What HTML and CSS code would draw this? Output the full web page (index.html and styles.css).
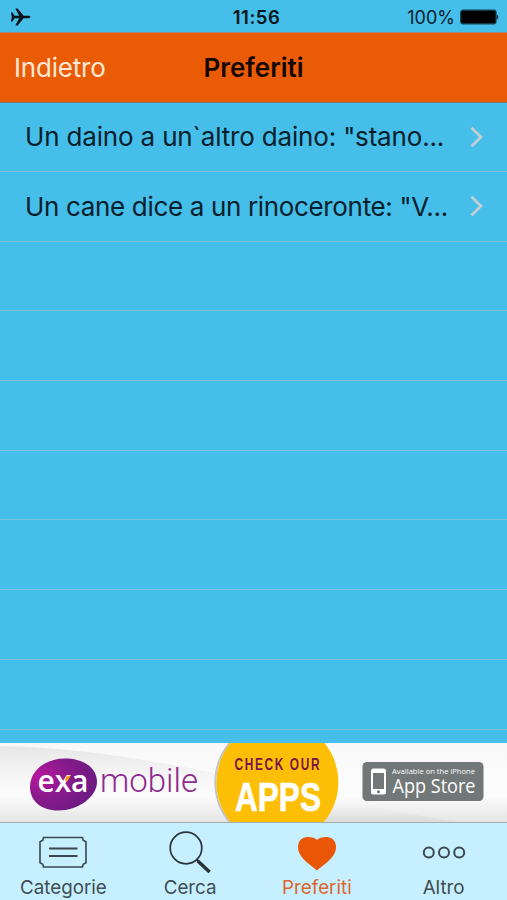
FILE: index.html
```html
<!DOCTYPE html>
<html lang="it">
<head>
    <meta charset="UTF-8">
    <meta name="viewport" content="width=device-width, initial-scale=1.0">
    <title>Preferiti</title>
    <link rel="stylesheet" href="styles.css">
</head>
<body>
    <div class="app">
        <div class="status-bar">
            <svg class="plane" width="20" height="18" viewBox="0 0 20 18">
                <path d="M0 4.500h1.500L3.600 7.700h4.600L4.300.6h2.300L12.600 7.700h5q1.900.2 1.900 1.300t-1.900 1.300h-5L6.600 17.400H4.300L8.200 10.300H3.600L1.500 13.500H0L.8 9z" fill="#05121a"/>
            </svg>
            <span class="time">11:56</span>
            <div class="battery">
                <span class="percent">100%</span>
                <svg width="39" height="16" viewBox="0 0 39 16">
                    <rect x=".7" y="1.200" width="35.300" height="13.600" rx="2.200" fill="#000" stroke="#12414f" stroke-width="1.200"/>
                    <path d="M36.700 5.500q1.600.6 1.600 2.500t-1.600 2.500z" fill="#082530"/>
                </svg>
            </div>
        </div>

        <div class="nav-bar">
            <a class="back">Indietro</a>
            <h1 class="title">Preferiti</h1>
        </div>

        <ul class="list">
            <li class="row">
                <span class="joke first">Un daino a un`altro daino: "stano...</span>
                <svg class="chevron" width="14" height="22" viewBox="0 0 14 22"><path d="M1.500 1.800L11 11l-9.500 9.200" fill="none" stroke="#c3ced2" stroke-width="2.700"/></svg>
            </li>
            <li class="row">
                <span class="joke second">Un cane dice a un rinoceronte: "V...</span>
                <svg class="chevron" width="14" height="22" viewBox="0 0 14 22"><path d="M1.500 1.800L11 11l-9.500 9.200" fill="none" stroke="#c3ced2" stroke-width="2.700"/></svg>
            </li>
            <li class="row"></li>
            <li class="row"></li>
            <li class="row"></li>
            <li class="row"></li>
            <li class="row"></li>
            <li class="row"></li>
            <li class="row"></li>
        </ul>

        <div class="banner">
            <svg width="507" height="80" viewBox="0 0 507 80">
                <defs>
                    <linearGradient id="paper" x1="0" y1="0" x2="0" y2="1">
                        <stop offset="0" stop-color="#f8f8f8"/>
                        <stop offset=".65" stop-color="#fdfdfd"/>
                        <stop offset="1" stop-color="#e4e4e4"/>
                    </linearGradient>
                    <linearGradient id="sweep" x1="0" y1="0" x2="0" y2="1">
                        <stop offset="0" stop-color="#f4f4f4" stop-opacity="0"/>
                        <stop offset="1" stop-color="#d9d9d9"/>
                    </linearGradient>
                    <radialGradient id="blob" cx=".15" cy=".35" r=".8">
                        <stop offset="0" stop-color="#b5179e"/>
                        <stop offset=".5" stop-color="#8a1a8c"/>
                        <stop offset="1" stop-color="#6f1b83"/>
                    </radialGradient>
                    <linearGradient id="fade" x1="0" y1="0" x2="0" y2="1">
                        <stop offset="0" stop-color="#e6e6e6"/>
                        <stop offset="1" stop-color="#fdfdfd" stop-opacity="0"/>
                    </linearGradient>
                </defs>
                <rect width="507" height="80" fill="url(#paper)"/>
                <path d="M0 3C70 4 140 15 225 32V68H0z" fill="url(#fade)"/>
                <path d="M320 58C380 60 420 76 470 80H320z" fill="url(#sweep)"/>

                <path d="M30 44C30 27 46 15.500 65 15.500C84 15.500 97 25 97 39C97 54 78 67.500 58 67.500C41 67.500 30 58 30 44z" fill="url(#blob)"/>
                <text class="exa" x="37.500" y="49" textLength="51">exa</text>
                <path d="M64.500 37l2.200-4.200h3.800l-3.300 5.500z" fill="#f7a11b"/>
                <text class="mobile" x="100" y="49" textLength="98" lengthAdjust="spacingAndGlyphs">mobile</text>

                <path d="M229.500 0A62 62 0 0 0 230.500 80" fill="none" stroke="#c4c4c4" stroke-width="2"/>
                <path d="M230.500 0H324.500A62 62 0 0 1 323 80H231.500A62 62 0 0 1 230.500 0z" fill="#fdbf06"/>
                <text class="check" transform="translate(234.500 27) scale(.72 1)" textLength="118">CHECK OUR</text>
                <text class="apps" x="235" y="67.500" textLength="86" lengthAdjust="spacingAndGlyphs">APPS</text>

                <rect x="362.500" y="19" width="121" height="39" rx="4.500" fill="#727777"/>
                <rect x="371" y="25.500" width="15" height="26" rx="2.500" fill="#fff"/>
                <rect x="373" y="30" width="11" height="16" fill="#727777"/>
                <circle cx="378.500" cy="48.800" r="1.500" fill="#727777"/>
                <text class="available" x="392" y="31" textLength="83" lengthAdjust="spacingAndGlyphs">Available on the iPhone</text>
                <text class="store" x="392.500" y="50" textLength="83" lengthAdjust="spacingAndGlyphs">App Store</text>
                <rect y="79" width="507" height="1" fill="#a9adae"/>
            </svg>
        </div>

        <div class="tab-bar">
            <a class="tab">
                <svg width="50" height="44" viewBox="0 0 50 44" fill="none" stroke="#3b474c" stroke-width="1.600">
                    <path d="M5.500 14.500H44.500L45.200 17.200L48 18.800V39.700L45.200 41.300L44.500 44H5.500L4.800 41.300L2 39.700V18.800L4.800 17.200z"/>
                    <path d="M11 25.500H39.500M11 33H39.500" stroke-width="2"/>
                </svg>
                <span class="label categorie">Categorie</span>
            </a>
            <a class="tab">
                <svg width="50" height="44" viewBox="0 0 50 44" fill="none" stroke="#2c3337">
                    <circle cx="21" cy="25" r="15.800" stroke-width="1.700"/>
                    <path d="M31.500 36.500l3 3" stroke-width="2.200"/>
                    <path d="M32.800 38L44.600 49" stroke-width="3.500"/>
                </svg>
                <span class="label cerca">Cerca</span>
            </a>
            <a class="tab active">
                <svg width="50" height="44" viewBox="0 0 50 44">
                    <path d="M25 47.500C19 42 6 34.800 6 24C6 17.500 10.500 14 15.500 14C20 14 23.500 15 25 17C26.500 15 30 14 34.500 14C39.500 14 44 17.500 44 24C44 34.800 31 42 25 47.500z" fill="#e95605"/>
                </svg>
                <span class="label preferiti">Preferiti</span>
            </a>
            <a class="tab">
                <svg width="50" height="44" viewBox="0 0 50 44" fill="none" stroke="#3b474c" stroke-width="2">
                    <circle cx="9.800" cy="29.500" r="5"/>
                    <circle cx="25" cy="29.500" r="5"/>
                    <circle cx="40.200" cy="29.500" r="5"/>
                </svg>
                <span class="label altro">Altro</span>
            </a>
        </div>
    </div>
</body>
</html>
```
FILE: styles.css
```css
* {
    box-sizing: border-box;
}
body {
    margin: 0;
    font-family: Inter, "Liberation Sans", sans-serif;
    background-color: #45beea;
}
.app {
    width: 507px;
    height: 900px;
    display: flex;
    flex-direction: column;
    overflow: hidden;
}
.status-bar {
    height: 32px;
    flex-shrink: 0;
    display: grid;
    grid-template-columns: 1fr auto 1fr;
    align-items: center;
    padding: 2px 8px 0 11px;
    font-size: 18px;
    color: #05202b;
}
.time {
    font-weight: 600;
    font-size: 18.5px;
    letter-spacing: 0.5px;
    color: #04141b;
    padding-left: 3px;
}
.battery {
    display: flex;
    justify-content: flex-end;
    align-items: center;
    gap: 5px;
}
.nav-bar {
    height: 71px;
    flex-shrink: 0;
    display: grid;
    grid-template-columns: 1fr auto 1fr;
    align-items: center;
    padding: 0 14px;
    background-color: #ea5b06;
    border-top: 1px solid #a38470;
    border-bottom: 1px solid #85796f;
}
.back {
    color: #ffe9d8;
    font-size: 26px;
    letter-spacing: -0.2px;
}
.title {
    margin: 0;
    font-size: 26px;
    font-weight: 600;
    color: #140600;
}
.list {
    flex: 1;
    min-height: 0;
    overflow: hidden;
    list-style: none;
    margin: 0;
    padding: 0;
}
.row {
    height: 69.7px;
    display: flex;
    align-items: center;
    justify-content: space-between;
    padding: 0 23px 0 25px;
    border-bottom: 1px solid #7cc5de;
}
.row:first-child {
    height: 69px;
    padding-bottom: 1px;
}
.joke {
    font-size: 26px;
    color: #06202b;
    white-space: nowrap;
}
.first {
    letter-spacing: -0.17px;
}
.second {
    letter-spacing: -0.34px;
}
.banner {
    height: 80px;
    flex-shrink: 0;
}
.banner svg {
    display: block;
}
.exa {
    font-family: "Open Sans", sans-serif;
    font-size: 30px;
    font-weight: 600;
    fill: #fff;
}
.mobile {
    font-family: Roboto, sans-serif;
    font-size: 33px;
    font-weight: 300;
    fill: #8d2c91;
}
.check {
    font-family: "Liberation Sans", sans-serif;
    font-size: 16.5px;
    font-weight: bold;
    fill: #7a1648;
}
.apps {
    font-family: "Liberation Sans", sans-serif;
    font-size: 40.5px;
    font-weight: bold;
    fill: #fff;
    stroke: #fff;
    stroke-width: 0.6px;
}
.available {
    font-family: "Open Sans", sans-serif;
    font-size: 8px;
    fill: #fff;
}
.store {
    font-family: "Open Sans", sans-serif;
    font-size: 20px;
    font-weight: 500;
    fill: #fff;
}
.tab-bar {
    height: 77px;
    flex-shrink: 0;
    display: grid;
    grid-template-columns: repeat(4, 1fr);
    background-color: #c6f0ff;
}
.tab {
    display: flex;
    flex-direction: column;
    align-items: center;
    color: #3f4c52;
}
.tab svg {
    overflow: visible;
}
.label {
    font-size: 18.8px;
    line-height: 24px;
    margin-top: 9px;
}
.active {
    color: #e0642a;
}
```
